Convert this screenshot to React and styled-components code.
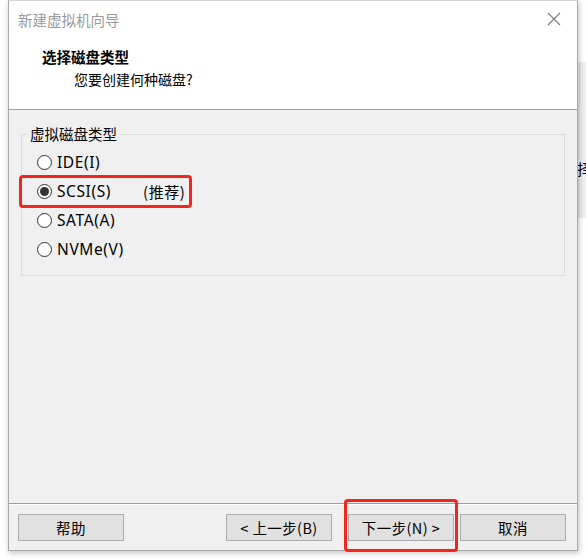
import React from "react";
import styled, { createGlobalStyle } from "styled-components";

const GlobalStyle = createGlobalStyle`
  html, body {
    margin: 0;
    padding: 0;
    background: #ffffff;
  }
  body {
    width: 586px;
    height: 559px;
    overflow: hidden;
    font-family: "Noto Sans CJK SC", "Noto Sans", sans-serif;
  }
`;

const options = [
  { id: "ide", label: "IDE(I)" },
  { id: "scsi", label: "SCSI(S)", note: "(推荐)", checked: true, marked: true },
  { id: "sata", label: "SATA(A)" },
  { id: "nvme", label: "NVMe(V)" },
];

function App() {
  return (
    <>
      <GlobalStyle />
      <Desktop>
        <BackWindow>
          <BackText>择</BackText>
        </BackWindow>
        <Window>
          <TitleBar>
            <TitleText>新建虚拟机向导</TitleText>
            <CloseButton>
              <svg width="14" height="14" viewBox="0 0 14 14">
                <path d="M1 1 L13 13 M13 1 L1 13" stroke="#7a7a7a" strokeWidth="1.1" fill="none" />
              </svg>
            </CloseButton>
          </TitleBar>
          <Header>
            <HeaderTitle>选择磁盘类型</HeaderTitle>
            <HeaderSub>您要创建何种磁盘?</HeaderSub>
          </Header>
          <Body>
            <GroupBox>
              <Legend>虚拟磁盘类型</Legend>
              <OptionList>
                {options.map((o) => (
                  <Option key={o.id} $marked={o.marked}>
                    <Radio $checked={o.checked} />
                    <OptionLabel>{o.label}</OptionLabel>
                    {o.note && <OptionNote>{o.note}</OptionNote>}
                  </Option>
                ))}
              </OptionList>
            </GroupBox>
          </Body>
          <Footer>
            <Button>帮助</Button>
            <Spacer />
            <Button>&lt; 上一步(B)</Button>
            <NextWrap>
              <Button>下一步(N) &gt;</Button>
            </NextWrap>
            <Button>取消</Button>
          </Footer>
        </Window>
      </Desktop>
    </>
  );
}

const Desktop = styled.div`
  position: relative;
  width: 586px;
  height: 559px;
  padding-left: 8px;
  box-sizing: border-box;
`;

const BackWindow = styled.div`
  position: absolute;
  left: 560px;
  top: 62px;
  width: 26px;
  height: 156px;
  overflow: hidden;
  background: linear-gradient(to right, #c4c4c4, #dadada 45%, #f0f0f0 90%);
`;

const BackText = styled.span`
  position: absolute;
  left: 17px;
  top: 96px;
  font-size: 15px;
  color: #000;
`;

const Window = styled.div`
  position: relative;
  width: 570px;
  height: 551px;
  box-sizing: border-box;
  border: 1px solid #a9a9a9;
  border-top-color: #d4d4d4;
  background: #f0f0f0;
  display: flex;
  flex-direction: column;
  box-shadow: 1px 2px 6px rgba(0, 0, 0, 0.25);
`;

const TitleBar = styled.div`
  height: 32px;
  background: #fff;
  display: flex;
  align-items: center;
  justify-content: space-between;
  padding-left: 9px;
  padding-right: 16px;
  flex-shrink: 0;
`;

const TitleText = styled.span`
  font-size: 14.5px;
  color: #9a9a9a;
  margin-top: 5px;
`;

const CloseButton = styled.span`
  display: flex;
  margin-top: 4px;
`;

const Header = styled.div`
  height: 77px;
  background: #fff;
  border-bottom: 1px solid #a0a0a0;
  padding-left: 33px;
  box-sizing: border-box;
  display: flex;
  flex-direction: column;
  flex-shrink: 0;
`;

const HeaderTitle = styled.div`
  font-size: 14.5px;
  font-weight: bold;
  color: #000;
  line-height: 18px;
  margin-top: 15px;
`;

const HeaderSub = styled.div`
  font-size: 14px;
  color: #000;
  line-height: 18px;
  margin-top: 4px;
  padding-left: 32px;
`;

const Body = styled.div`
  flex: 1;
  padding: 24px 12px 0 12px;
  border-bottom: 1px solid #a0a0a0;
  box-shadow: 0 1px 0 #fff;
`;

const GroupBox = styled.div`
  position: relative;
  border: 1px solid #dcdcdc;
  height: 142px;
  box-sizing: border-box;
`;

const Legend = styled.span`
  position: absolute;
  left: 5px;
  top: -11px;
  padding: 0 3px;
  background: #f0f0f0;
  font-size: 14.5px;
  line-height: 20px;
  color: #000;
`;

const OptionList = styled.div`
  display: flex;
  flex-direction: column;
  gap: 9px;
  padding: 17px 0 0 15px;
`;

const Option = styled.div`
  position: relative;
  display: flex;
  align-items: center;
  height: 20px;
  ${(p) =>
    p.$marked &&
    `
    &::after {
      content: "";
      position: absolute;
      left: -18px;
      top: -6px;
      width: 167px;
      height: 27px;
      border: 3px solid #f5241c;
      border-radius: 4px;
    }
  `}
`;

const Radio = styled.span`
  width: 15px;
  height: 15px;
  box-sizing: border-box;
  border: 1px solid #333;
  border-radius: 50%;
  background: #fff;
  display: flex;
  align-items: center;
  justify-content: center;
  margin-right: 5px;
  &::before {
    content: "";
    width: 9px;
    height: 9px;
    border-radius: 50%;
    background: #333;
    display: ${(p) => (p.$checked ? "block" : "none")};
  }
`;

const OptionLabel = styled.span`
  font-family: "Noto Sans", "Noto Sans CJK SC", sans-serif;
  font-size: 15.5px;
  letter-spacing: 0.6px;
  color: #000;
`;

const OptionNote = styled.span`
  font-size: 15px;
  letter-spacing: 0.5px;
  color: #000;
  margin-left: 32px;
`;

const Footer = styled.div`
  height: 46px;
  display: flex;
  align-items: flex-start;
  padding: 10px 11px 0 9px;
  box-sizing: border-box;
  flex-shrink: 0;
`;

const Spacer = styled.div`
  flex: 1;
`;

const NextWrap = styled.div`
  position: relative;
  margin: 0 6px 0 16px;
  &::after {
    content: "";
    position: absolute;
    left: -4px;
    top: -15px;
    width: 108px;
    height: 47px;
    border: 3px solid #f5241c;
    border-radius: 4px;
  }
`;

const Button = styled.div`
  width: 106px;
  height: 27px;
  box-sizing: border-box;
  border: 1px solid #adadad;
  background: #e1e1e1;
  display: flex;
  align-items: center;
  justify-content: center;
  font-size: 14.5px;
  letter-spacing: 0.4px;
  color: #000;
  font-family: "Noto Sans CJK SC", "Noto Sans", sans-serif;
`;

export default App;
